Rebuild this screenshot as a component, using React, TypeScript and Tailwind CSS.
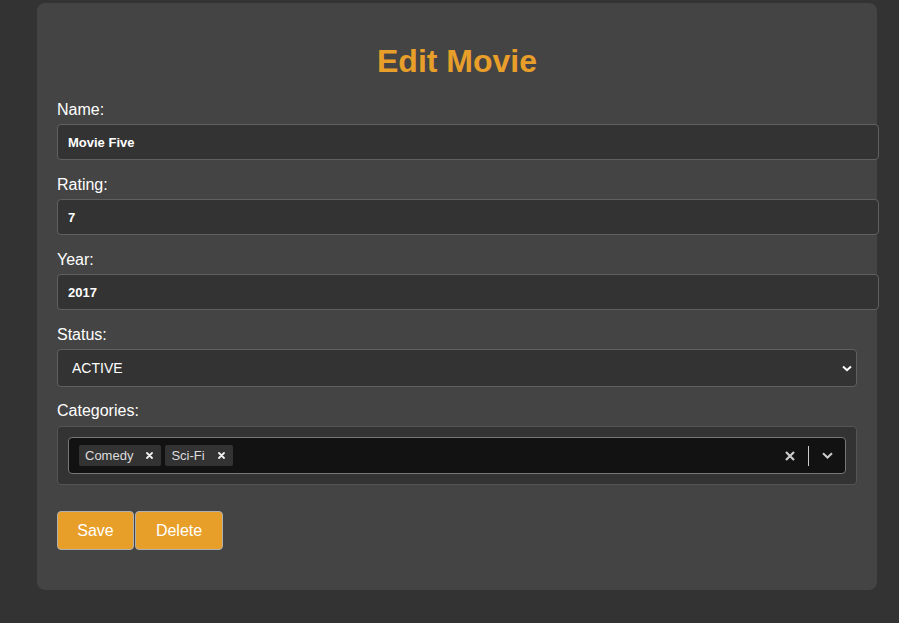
import { useState } from "react";

const labelCls = "block text-[16px] leading-[18px] text-white";
const inputCls =
  "block h-[36px] w-[822px] rounded-[4px] border border-[#606060] bg-[#333333] px-[10px] text-[13px] font-bold text-white outline-none";

function TextField({ label, value }: { label: string; value: string }) {
  const [v, setV] = useState(value);
  return (
    <div className="mb-[16px]">
      <label className={`${labelCls} mb-[5px]`}>{label}</label>
      <input className={inputCls} value={v} onChange={(e) => setV(e.target.value)} />
    </div>
  );
}

function Chip({ text }: { text: string }) {
  return (
    <div className="flex h-[21px] items-center rounded-[2px] bg-[#333333] pl-[6px] pr-[8px]">
      <span className="text-[13px] text-[#dddddd]">{text}</span>
      <svg className="ml-[13px]" width="7" height="7" viewBox="0 0 7 7">
        <path d="M1 1L6 6M6 1L1 6" stroke="#eeeeee" strokeWidth="1.8" strokeLinecap="round" />
      </svg>
    </div>
  );
}

export default function App() {
  const [status, setStatus] = useState("ACTIVE");

  return (
    <div className="min-h-screen bg-[#333333] pt-[3px] pl-[37px] font-['Liberation_Sans',Arial,sans-serif]">
      <div className="w-[840px] rounded-lg bg-[#444444] px-[20px] pt-[20px] pb-[40px]">
        <h1 className="mt-[20px] mb-[21px] text-center text-[32px] leading-[37px] font-bold text-[#e89f2a]">
          Edit Movie
        </h1>

        <TextField label="Name:" value="Movie Five" />
        <TextField label="Rating:" value="7" />
        <TextField label="Year:" value="2017" />

        <div className="mb-[15px]">
          <label className={`${labelCls} mb-[5px]`}>Status:</label>
          <div className="relative">
            <select
              value={status}
              onChange={(e) => setStatus(e.target.value)}
              className="block h-[38px] w-full appearance-none rounded-[4px] border border-[#606060] bg-[#333333] pl-[14px] text-[14px] text-white outline-none"
            >
              <option value="ACTIVE">ACTIVE</option>
              <option value="INACTIVE">INACTIVE</option>
            </select>
            <svg
              className="pointer-events-none absolute top-[16px] right-[5px]"
              width="10"
              height="7"
              viewBox="0 0 10 7"
            >
              <path d="M1 1.5L5 5.2L9 1.5" fill="none" stroke="#ffffff" strokeWidth="2" />
            </svg>
          </div>
        </div>

        <div className="mb-[26px]">
          <label className={`${labelCls} mb-[6px]`}>Categories:</label>
          <div className="rounded-[4px] border border-[#555555] bg-[#333333] p-[10px]">
            <div className="flex h-[37px] items-center rounded-[4px] border border-[#777777] bg-[#121212] pl-[10px]">
              <div className="flex flex-1 gap-[4px]">
                <Chip text="Comedy" />
                <Chip text="Sci-Fi" />
              </div>
              <div className="flex items-center">
                <div className="flex w-[36px] justify-center">
                  <svg width="10" height="10" viewBox="0 0 10 10">
                    <path d="M1 1L9 9M9 1L1 9" stroke="#cccccc" strokeWidth="2.2" />
                  </svg>
                </div>
                <div className="h-[20px] w-px bg-[#cccccc]" />
                <div className="flex w-[36px] justify-center">
                  <svg width="11" height="7" viewBox="0 0 11 7">
                    <path d="M1 1.2L5.5 5.5L10 1.2" fill="none" stroke="#cccccc" strokeWidth="2" />
                  </svg>
                </div>
              </div>
            </div>
          </div>
        </div>

        <div className="flex gap-[1px]">
          <button className="h-[39px] w-[77px] rounded-[4px] border border-[#b0b0b0] bg-[#e89f2a] text-[16px] text-white">
            Save
          </button>
          <button className="h-[39px] w-[88px] rounded-[4px] border border-[#b0b0b0] bg-[#e89f2a] text-[16px] text-white">
            Delete
          </button>
        </div>
      </div>
    </div>
  );
}
